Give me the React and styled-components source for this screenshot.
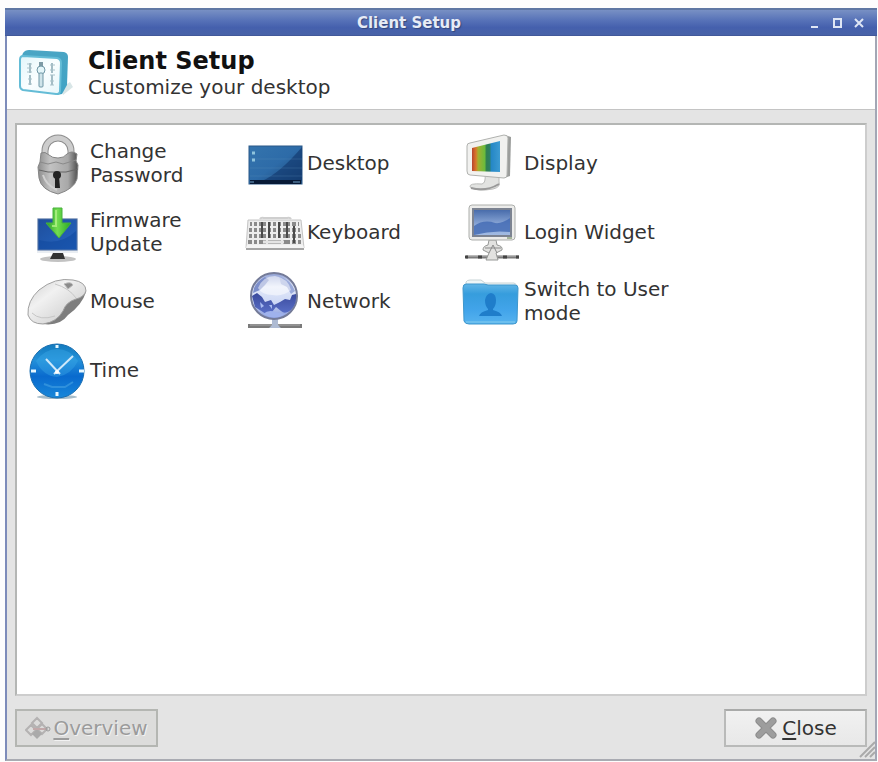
import React from "react";
import styled, { createGlobalStyle } from "styled-components";

const GlobalStyle = createGlobalStyle`
  * {
    box-sizing: border-box;
  }

  html,
  body,
  #root {
    height: 100%;
  }

  body {
    margin: 0;
    background: #fdfdfd;
    font-family: "DejaVu Sans", "Liberation Sans", sans-serif;
    font-size: 20px;
    color: #333;
  }

  button {
    font: inherit;
    color: inherit;
  }
`;

const Page = styled.div`
  display: flex;
  min-height: 100%;
  padding: 8px 1px 1px 5px;
`;

const Window = styled.main`
  display: flex;
  flex: 1;
  flex-direction: column;
  border: 2px solid #7d8cba;
  border-top: 0;
  border-right-color: #a3a7b5;
  border-bottom-color: #a9abb2;
  background: #e4e4e4;
`;

const TitleBar = styled.div`
  display: grid;
  grid-template-columns: 1fr auto 1fr;
  align-items: center;
  height: 28px;
  margin: 0 -2px;
  padding: 0 10px;
  border-top: 2px solid #5f77a3;
  border-bottom: 1px solid #42599a;
  background: linear-gradient(#7890c4, #5873b8 40%, #4560ad 70%, #4863a8);
`;

const WindowTitle = styled.span`
  grid-column: 2;
  margin-right: 64px;
  font-size: 15px;
  font-weight: bold;
  color: #e6ebf6;
  text-shadow: 1px 1px 1px #33477c;
`;

const WindowControls = styled.div`
  display: flex;
  justify-content: flex-end;
  gap: 6px;

  button {
    display: flex;
    padding: 0;
    border: 0;
    background: none;
  }
`;

const Header = styled.header`
  display: flex;
  align-items: center;
  gap: 14px;
  height: 74px;
  padding: 0 10px;
  border-bottom: 1px solid #c4c4c4;
  background: #fff;

  h1 {
    margin: 0;
    font-size: 24px;
    line-height: 28px;
    color: #111;
  }

  p {
    margin: 0;
    line-height: 24px;
  }
`;

const Panel = styled.section`
  flex: 1;
  margin: 13px 8px 0;
  padding: 3px 11px;
  border: 2px solid #b4b6b4;
  border-right-color: #cdcdcd;
  border-bottom-color: #cdcdcd;
  background: #fff;
`;

const ItemGrid = styled.div`
  display: grid;
  grid-template-columns: repeat(auto-fill, 217px);
  grid-auto-rows: 69px;
`;

const Item = styled.button`
  display: flex;
  align-items: center;
  gap: 2px;
  padding: 0;
  border: 0;
  background: none;
  line-height: 24px;
  text-align: left;

  svg {
    flex: none;
    overflow: visible;
  }

  span {
    max-width: 152px;
  }
`;

const Footer = styled.footer`
  display: flex;
  justify-content: space-between;
  padding: 13px 8px 12px;
`;

const FooterButton = styled.button`
  display: flex;
  align-items: center;
  justify-content: center;
  gap: 4px;
  width: 143px;
  height: 38px;
  padding: 0;
  border: 2px solid #b9bab9;
  border-top-color: #a9aaa9;
  background: linear-gradient(#f1f1f1, #e8e8e8);

  &:disabled {
    gap: 2px;
    border-color: #b4b6b2;
    background: #dcdcdb;
    color: #9b9b9b;
    text-shadow: 1px 1px 0 #f2f2f2;
  }

  u {
    text-underline-offset: 3px;
  }
`;

const Grip = styled.svg`
  position: absolute;
  right: 2px;
  bottom: 4px;
`;

function SetupIcon() {
  return (
    <svg width="57" height="50" viewBox="0 0 57 50">
      <defs>
        <linearGradient id="setupFace" x1="0" y1="0" x2="1" y2="1">
          <stop offset="0" stopColor="#e2f5fa" />
          <stop offset=".5" stopColor="#fafeff" />
          <stop offset="1" stopColor="#e6f6fa" />
        </linearGradient>
        <linearGradient id="setupSide" x1="0" y1="0" x2="0" y2="1">
          <stop offset="0" stopColor="#4aa5c4" />
          <stop offset="1" stopColor="#3fa3c5" />
        </linearGradient>
      </defs>
      <path d="M46 47 56 39 53 34 44 40Z" fill="#c9dcdd" opacity=".7" />
      <path d="M6 5Q8 2 12 2L47 4Q51 5 51 9L50 37 45 46 40 47 4 10Z" fill="url(#setupSide)" />
      <path
        d="M6 8 40 10Q44 11 44 15L43 43Q43 46 39 46L6 42Q3 41 3 38V12Q3 8 6 8Z"
        fill="url(#setupFace)"
        stroke="#64bcd6"
        strokeWidth="2"
      />
      <path d="M13 15V37M35 15V38" stroke="#a3bcc5" strokeWidth="2" strokeDasharray="10 2" />
      <path d="M10 16h5M10 20h5M10 24h5M11 31h4M11 36h4M33 17h5M33 22h5M33 27h5M33 33h4M33 37h4" stroke="#a9c2ca" />
      <path d="M24 14V20" stroke="#7d9aa5" strokeWidth="4" />
      <circle cx="24" cy="22" r="4" fill="#e3f5f9" stroke="#6f97a6" />
      <rect x="22" y="25" width="4" height="14" rx="1" fill="#cfe4ea" stroke="#6f97a6" />
    </svg>
  );
}

function LockIcon() {
  return (
    <svg width="60" height="60" viewBox="0 0 60 60">
      <defs>
        <linearGradient id="lockBody">
          <stop offset="0" stopColor="#8d8d8d" />
          <stop offset=".3" stopColor="#c2c2c2" />
          <stop offset=".75" stopColor="#a8a8a8" />
          <stop offset="1" stopColor="#4d4d4d" />
        </linearGradient>
      </defs>
      <path d="M17 26V18a13 13 0 0 1 26 0v8" fill="none" stroke="#8d8d8d" strokeWidth="7" />
      <path d="M17 26V18a13 13 0 0 1 26 0v8" fill="none" stroke="#cdcdcd" strokeWidth="5" />
      <path
        d="M13 20Q17 18 21 22 24 25 30 25 36 25 39 21 44 17 49 21L48 28 50 32 49 46Q46 56 30 61 13 57 11 45L10 34 12 29Z"
        fill="url(#lockBody)"
        stroke="#858585"
      />
      <path d="M12 29 20 31 28 29 35 31 48 27" fill="none" stroke="#8a8a8a" />
      <path d="M11 37 20 39 38 39 50 36" fill="none" stroke="#666" />
      <path d="M15 42Q18 52 29 57" fill="none" stroke="#d0d0d0" strokeWidth="2" />
      <circle cx="29" cy="42" r="4" fill="#222" />
      <path d="M27 43h4l1 12h-5Z" fill="#222" />
    </svg>
  );
}

function DesktopIcon() {
  return (
    <svg width="60" height="60" viewBox="0 0 60 60">
      <defs>
        <linearGradient id="desktopSky" x1="0" y1="0" x2="1" y2="1">
          <stop offset="0" stopColor="#3474ad" />
          <stop offset=".5" stopColor="#2d6ba8" />
          <stop offset="1" stopColor="#174171" />
        </linearGradient>
      </defs>
      <rect x="4" y="13" width="53" height="38" fill="url(#desktopSky)" stroke="#2b5988" />
      <path d="M57 14V48H17Q35 40 57 14Z" fill="#12396e" opacity=".65" />
      <path d="M5 26H57M5 35H57M5 43H57" stroke="#6294bd" opacity=".25" />
      <rect x="5" y="47" width="51" height="4" fill="#071a36" />
      <path d="M5 49h4M48 49h7" stroke="#3d5f80" strokeWidth="2" />
      <path d="M7 20h3M7 27h3" stroke="#8fc4dd" strokeWidth="3" />
    </svg>
  );
}

function DisplayIcon() {
  return (
    <svg width="60" height="60" viewBox="0 0 60 60">
      <defs>
        <linearGradient id="displayBars">
          <stop offset="0" stopColor="#b8442f" />
          <stop offset=".14" stopColor="#d9772c" />
          <stop offset=".22" stopColor="#a3b030" />
          <stop offset=".45" stopColor="#6cbb3c" />
          <stop offset=".52" stopColor="#2f7f52" />
          <stop offset=".64" stopColor="#2c8066" />
          <stop offset=".68" stopColor="#2486c5" />
          <stop offset="1" stopColor="#3d9bd2" />
        </linearGradient>
      </defs>
      <path d="M23 41 37 42V49Q39 54 31 56 15 59 8 54 7 50 20 51 24 50 23 41Z" fill="#e2e3e1" stroke="#bcbdbb" />
      <path d="M9 55Q24 59 37 51" fill="none" stroke="#999" strokeWidth="2" />
      <path d="M43 2 49 4 48 43 42 45Z" fill="#9b9d9b" />
      <path d="M5 13Q5 10 8 10L42 2Q46 2 46 5L45 42Q45 45 42 45L8 42Q5 42 5 38Z" fill="#f1f1ef" stroke="#b0b2af" />
      <path d="M10 15 38 8V39L10 38Z" fill="url(#displayBars)" />
    </svg>
  );
}

function FirmwareIcon() {
  return (
    <svg width="60" height="60" viewBox="0 0 60 60">
      <defs>
        <linearGradient id="firmwareScreen" x1="0" y1="0" x2="1" y2="1">
          <stop offset="0" stopColor="#1e4e9c" />
          <stop offset="1" stopColor="#2566c2" />
        </linearGradient>
        <linearGradient id="firmwareArrow">
          <stop offset="0" stopColor="#259b28" />
          <stop offset=".45" stopColor="#74dd50" />
          <stop offset="1" stopColor="#26a923" />
        </linearGradient>
      </defs>
      <ellipse cx="30" cy="57" rx="18" ry="3" fill="#c2c2c2" />
      <path d="M25 51H35L37 57H22Z" fill="#333" />
      <rect x="9" y="16" width="41" height="35" fill="#e9edf2" />
      <rect x="10" y="17" width="39" height="31" fill="url(#firmwareScreen)" stroke="#4c6d9e" />
      <path d="M11 38Q32 44 48 29V47H11Z" fill="#0d459b" opacity=".5" />
      <path d="M25 6H34V21H43L31 36 18 21H25Z" fill="url(#firmwareArrow)" stroke="#49b23c" />
      <path d="M28 8V24L24 24" fill="none" stroke="#baf58f" strokeWidth="2" opacity=".7" />
    </svg>
  );
}

function KeyboardIcon() {
  return (
    <svg width="60" height="60" viewBox="0 0 60 60">
      <path d="M15 17Q16 15 19 16L42 16Q45 15 46 17" fill="none" stroke="#cfcfcf" strokeWidth="2" />
      <path d="M3 18H56L59 46H1Z" fill="#ededed" stroke="#c4c4c4" />
      <path d="M5 22H54M4 28H55M4 34H56M3 40H56" stroke="#8a8a8a" strokeWidth="4" />
      <path
        d="M8 19V42M13 19V42M22 19V42M27 19V37M32 19V37M37 19V42M46 19V42M52 19V42"
        stroke="#ededed"
        strokeWidth="2"
      />
      <path d="M17 20V36M24 20V36M34 20V36M42 20V36M49 24V41" stroke="#4a4a4a" strokeWidth="2" />
      <path d="M18 40H39" stroke="#e4e4e4" strokeWidth="3" />
      <path d="M2 43H58L59 46H1Z" fill="#f4f4f4" />
      <path d="M1 47H59" stroke="#a5a5a5" strokeWidth="2" />
    </svg>
  );
}

function LoginIcon() {
  return (
    <svg width="60" height="60" viewBox="0 0 60 60">
      <defs>
        <linearGradient id="loginScreen" x1="0" y1="0" x2="0" y2="1">
          <stop offset="0" stopColor="#4468a8" />
          <stop offset=".6" stopColor="#8fabd9" />
          <stop offset="1" stopColor="#a3bce4" />
        </linearGradient>
      </defs>
      <path d="M4 55H57" stroke="#7b7b7b" strokeWidth="3" />
      <path d="M6 54H55" stroke="#b9b9b9" />
      <path d="M3 55h3M16 55h4M41 55h4M54 55h3" stroke="#444" strokeWidth="3" />
      <path d="M27 38H34L35 43Q41 44 40 48L34 51 36 58H24L27 51 21 48Q21 44 26 43Z" fill="#e2e2e0" stroke="#969896" />
      <path d="M23 46H39M27 51 31 43 35 51" fill="none" stroke="#8b8b8b" />
      <rect x="7" y="3" width="46" height="35" rx="3" fill="#ececea" stroke="#acaeab" />
      <rect x="11" y="7" width="38" height="27" fill="url(#loginScreen)" stroke="#7c8391" strokeWidth="2" />
      <path d="M12 24Q22 17 33 21 40 22 48 16V30Q30 28 12 33Z" fill="#4169b3" opacity=".8" />
      <path d="M45 36h5" stroke="#a5b59b" strokeWidth="2" />
    </svg>
  );
}

function MouseIcon() {
  return (
    <svg width="60" height="60" viewBox="0 0 60 60">
      <defs>
        <linearGradient id="mouseTop" x1="0" y1="0" x2="1" y2="1">
          <stop offset="0" stopColor="#cecece" />
          <stop offset=".35" stopColor="#f1f1f1" />
          <stop offset="1" stopColor="#c4c4c4" />
        </linearGradient>
      </defs>
      <path d="M9 52Q31 57 40 44 54 34 58 21L56 16 36 34Z" fill="#7e7e7e" />
      <path
        d="M0 44Q-1 30 11 19 27 6 45 9 58 11 58 20 56 26 48 28 38 31 35 40 29 51 15 53 3 53 0 44Z"
        fill="url(#mouseTop)"
        stroke="#a0a0a0"
      />
      <path d="M4 42Q12 50 27 45M27 13Q41 17 48 27" fill="none" stroke="#c6c6c6" />
      <path d="M36 13Q43 10 45 14L40 18Z" fill="#8b8b8b" stroke="#bbb" />
    </svg>
  );
}

function NetworkIcon() {
  return (
    <svg width="60" height="60" viewBox="0 0 60 60">
      <defs>
        <linearGradient id="globe" x1="0" y1="0" x2="0" y2="1">
          <stop offset="0" stopColor="#8fa0d4" />
          <stop offset=".3" stopColor="#e3e9f8" />
          <stop offset=".65" stopColor="#cdd8f5" />
          <stop offset="1" stopColor="#8296d8" />
        </linearGradient>
        <linearGradient id="globeLand" x1="0" y1="0" x2="0" y2="1">
          <stop offset="0" stopColor="#3a4a9c" />
          <stop offset="1" stopColor="#5a70c8" />
        </linearGradient>
      </defs>
      <path d="M3 55H57" stroke="#7a7a7a" strokeWidth="4" />
      <path d="M5 54H55" stroke="#aaa" />
      <path d="M27 48h6v6l3 3H24l3-3Z" fill="#aebbd3" />
      <circle cx="29" cy="25" r="23" fill="url(#globe)" stroke="#747b98" strokeWidth="2" />
      <path d="M9 17Q12 10 20 6L24 9 20 14 15 19 8 22Z" fill="#7d8fcb" />
      <path d="M34 5Q46 9 50 20L46 23 42 16 36 13Z" fill="#9aaadb" />
      <path
        d="M7 25 12 22 17 26 20 31 26 29 29 34 35 31 40 28 45 29 47 24 51 23Q52 33 46 39 40 44 36 40L31 36 27 41 21 43 10 36Z"
        fill="url(#globeLand)"
      />
      <path d="M15 31 19 35 16 37ZM24 34 27 34 27 38Z" fill="#a9bcf2" />
      <path d="M18 43Q24 38 30 41L40 43Q30 50 18 43Z" fill="#9fb2ec" />
      <path d="M13 17Q18 5 30 5 43 7 46 19 38 26 27 24 17 24 13 17Z" fill="#fff" opacity=".5" />
    </svg>
  );
}

function FolderIcon() {
  return (
    <svg width="60" height="60" viewBox="0 0 60 60">
      <defs>
        <linearGradient id="folderFront" x1="0" y1="0" x2="0" y2="1">
          <stop offset="0" stopColor="#61b5e6" />
          <stop offset=".25" stopColor="#369ddd" />
          <stop offset=".65" stopColor="#42a4ea" />
          <stop offset="1" stopColor="#56b3ef" />
        </linearGradient>
      </defs>
      <path d="M4 15V11Q5 9 8 9H19L23 12H52Q55 13 55 16Z" fill="#eff6f7" stroke="#c9d4d6" />
      <path
        d="M4 13H22L26 14H53Q56 14 56 17L55 50Q55 53 51 53H7Q3 53 2 50L1 17Q1 13 4 13Z"
        fill="url(#folderFront)"
        stroke="#3f97cc"
      />
      <path d="M4 51H53" stroke="#6cbfee" strokeWidth="2" />
      <path d="M29 22Q34 23 34 29 34 35 31 38V39Q39 41 40 45H17Q18 41 26 39V38Q23 35 23 29 24 23 29 22Z" fill="#1f7dca" />
    </svg>
  );
}

function ClockIcon() {
  return (
    <svg width="60" height="60" viewBox="0 0 60 60">
      <defs>
        <linearGradient id="clockFace" x1="0" y1="0" x2="0" y2="1">
          <stop offset="0" stopColor="#127abd" />
          <stop offset=".3" stopColor="#2390d9" />
          <stop offset=".6" stopColor="#096ace" />
          <stop offset="1" stopColor="#1787d9" />
        </linearGradient>
      </defs>
      <ellipse cx="29" cy="57" rx="20" ry="2" fill="#a8bdc9" />
      <circle cx="29" cy="31" r="27" fill="url(#clockFace)" stroke="#186db0" />
      <path d="M8 21Q17 9 29 9 42 9 50 21 43 35 29 37 15 36 8 21Z" fill="#3cabe9" opacity=".4" />
      <path d="M16 44 24 47H37L45 42" fill="none" stroke="#2f90dc" strokeWidth="2" />
      <path d="M29 5V8M29 52V56M3 31H8M51 31H56" stroke="#e6f7ff" strokeWidth="3" />
      <path d="M18 19 32 34M45 16 26 34" stroke="#cfe8fa" strokeWidth="2" />
      <circle cx="29" cy="32" r="2" fill="#fff" />
    </svg>
  );
}

function OverviewIcon() {
  return (
    <svg width="26" height="26" viewBox="0 0 26 26" fill="none">
      <path d="M12 3 17 8 12 13 7 8ZM6 10 11 15 6 20 1 15ZM17 9 22 14 17 19 12 14Z" stroke="#b4b2b2" strokeWidth="2" />
      <path d="M12 14 17 19 12 24 7 19Z" fill="#aaa" />
      <path d="M8 14H21" stroke="#c2a9aa" strokeWidth="2" />
      <circle cx="23" cy="14" r="2" stroke="#999" />
    </svg>
  );
}

function CloseIcon() {
  return (
    <svg width="24" height="24" viewBox="0 0 24 24" fill="none" strokeLinecap="round">
      <path d="M5 5 19 19M19 5 5 19" stroke="#8c8c8c" strokeWidth="7" />
      <path d="M5 5 19 19M19 5 5 19" stroke="#9d9d9d" strokeWidth="5" />
    </svg>
  );
}

const items = [
  { name: "Change Password", icon: <LockIcon /> },
  { name: "Desktop", icon: <DesktopIcon /> },
  { name: "Display", icon: <DisplayIcon /> },
  { name: "Firmware Update", icon: <FirmwareIcon /> },
  { name: "Keyboard", icon: <KeyboardIcon /> },
  { name: "Login Widget", icon: <LoginIcon /> },
  { name: "Mouse", icon: <MouseIcon /> },
  { name: "Network", icon: <NetworkIcon /> },
  { name: "Switch to User mode", icon: <FolderIcon /> },
  { name: "Time", icon: <ClockIcon /> },
];

const controls = [
  { name: "Minimize", path: "M4 12h7" },
  { name: "Maximize", path: "M4 4h9M5 4v9M12 4v9M5 12h7" },
  { name: "Close window", path: "M4 4l8 8M12 4l-8 8" },
];

function App() {
  return (
    <Page>
      <GlobalStyle />
      <Window>
        <TitleBar>
          <WindowTitle>Client Setup</WindowTitle>
          <WindowControls>
            {controls.map((control) => (
              <button key={control.name} type="button" aria-label={control.name}>
                <svg width="16" height="16" viewBox="0 0 16 16">
                  <path d={control.path} fill="none" stroke="#dfe6f5" strokeWidth="2" />
                </svg>
              </button>
            ))}
          </WindowControls>
        </TitleBar>

        <Header>
          <SetupIcon />
          <div>
            <h1>Client Setup</h1>
            <p>Customize your desktop</p>
          </div>
        </Header>

        <Panel>
          <ItemGrid>
            {items.map((item) => (
              <Item key={item.name} type="button">
                {item.icon}
                <span>{item.name}</span>
              </Item>
            ))}
          </ItemGrid>
        </Panel>

        <Footer>
          <FooterButton type="button" disabled>
            <OverviewIcon />
            <span>
              <u>O</u>verview
            </span>
          </FooterButton>
          <FooterButton type="button">
            <CloseIcon />
            <span>
              <u>C</u>lose
            </span>
          </FooterButton>
        </Footer>
      </Window>
      <Grip width="18" height="18" viewBox="0 0 18 18">
        <path d="M2 17 17 2M7 17 17 7M12 17 17 12" stroke="#aaa" strokeWidth="2" />
      </Grip>
    </Page>
  );
}

export default App;
